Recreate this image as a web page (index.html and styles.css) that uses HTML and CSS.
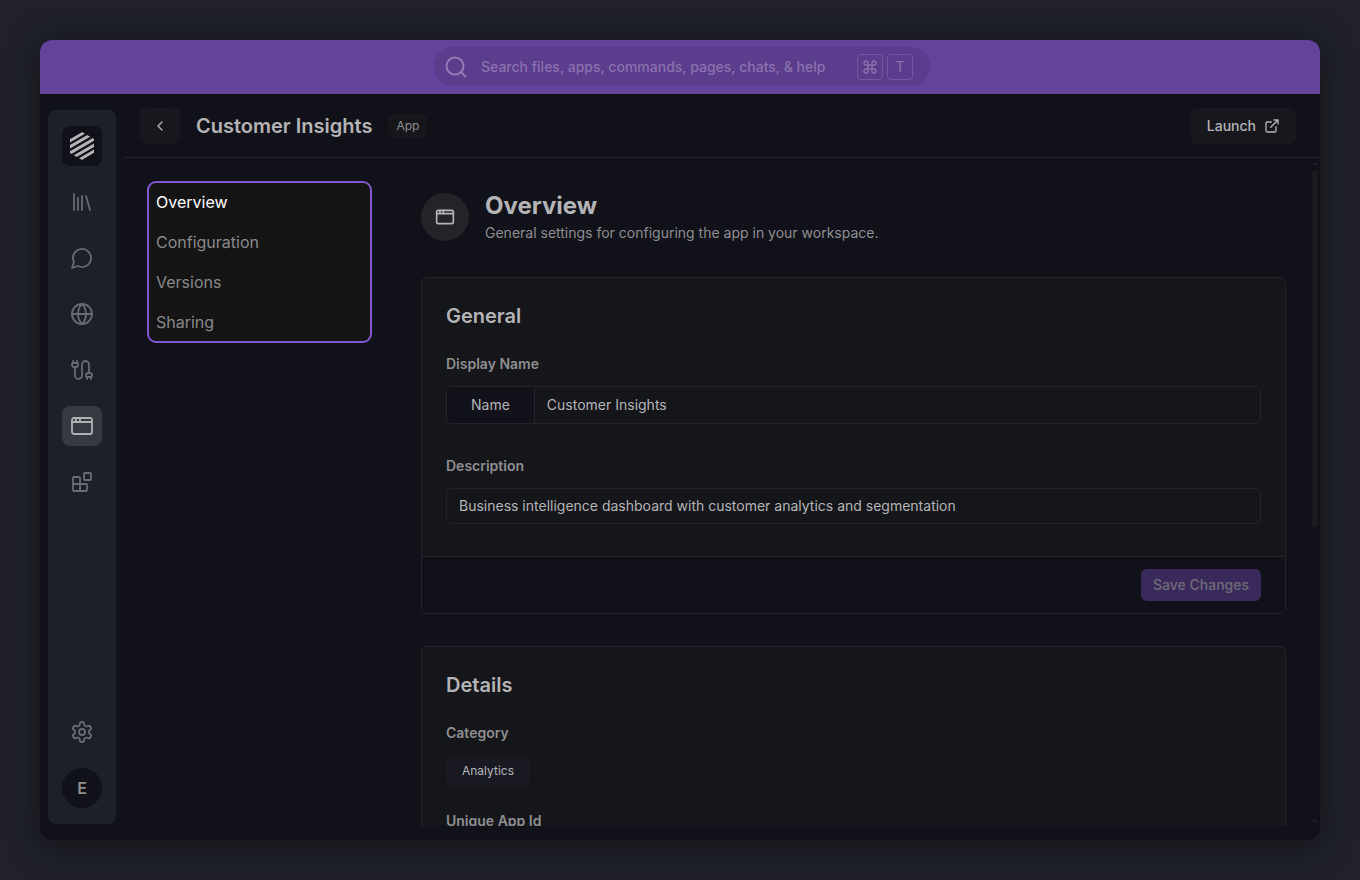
FILE: index.html
```html
<!DOCTYPE html>
<html lang="en">
<head>
<meta charset="utf-8">
<title>Customer Insights</title>
<link rel="stylesheet" href="styles.css">
</head>
<body>
<div class="window">
  <header class="topbar">
    <label class="search">
      <svg class="search-icon" viewBox="0 0 24 24"><circle cx="11" cy="11" r="8.5"/><path d="M17.5 17.5 21.5 21.5"/></svg>
      <input type="text" placeholder="Search files, apps, commands, pages, chats, &amp; help" aria-label="Search">
      <span class="keys">
        <kbd><svg viewBox="0 0 24 24"><path d="M15 6v12a3 3 0 1 0 3-3H6a3 3 0 1 0 3 3V6a3 3 0 1 0-3 3h12a3 3 0 1 0-3-3"/></svg></kbd>
        <kbd>T</kbd>
      </span>
    </label>
  </header>
  <div class="body">
    <nav class="rail" aria-label="Workspace">
      <a class="logo" href="#" aria-label="Home">
        <svg viewBox="0 0 24 28">
          <clipPath id="hex"><path d="M12 0 24 7V21L12 28 0 21V7Z"/></clipPath>
          <g clip-path="url(#hex)"><path d="M-2 9.9 26-6.5M-2 16 26-.3M-2 22.2 26 5.8M-2 28.3 26 12M-2 34.5 26 18.1"/></g>
        </svg>
      </a>
      <a class="rail-item" href="#" aria-label="Library"><svg viewBox="0 0 24 24"><path d="m16 6 4 14M12 6v14M8 8v12M4 4v16"/></svg></a>
      <a class="rail-item" href="#" aria-label="Chats"><svg viewBox="0 0 24 24"><path d="M7.9 20A9 9 0 1 0 4 16.1L2 22Z"/></svg></a>
      <a class="rail-item" href="#" aria-label="Web"><svg viewBox="0 0 24 24"><circle cx="12" cy="12" r="10"/><path d="M12 2a14.5 14.5 0 0 0 0 20 14.5 14.5 0 0 0 0-20M2 12h20"/></svg></a>
      <a class="rail-item" href="#" aria-label="Connections"><svg viewBox="0 0 24 24"><path d="M17 21v-2a1 1 0 0 1-1-1v-1a2 2 0 0 1 2-2h2a2 2 0 0 1 2 2v1a1 1 0 0 1-1 1v2M19 15V6.5a1 1 0 0 0-7 0v11a1 1 0 0 1-7 0V9M21 21v-2h-4M3 5h4V3M7 5a1 1 0 0 1 1 1v1a2 2 0 0 1-2 2H4a2 2 0 0 1-2-2V6a1 1 0 0 1 1-1V3"/></svg></a>
      <a class="rail-item active" href="#" aria-label="Apps"><svg viewBox="0 0 24 24"><rect x="2" y="4" width="20" height="16" rx="2"/><path d="M10 4v4M2 8h20M6 4v4"/></svg></a>
      <a class="rail-item" href="#" aria-label="Blocks"><svg viewBox="0 0 24 24"><rect x="14" y="3" width="7" height="7" rx="1"/><path d="M10 21V8a1 1 0 0 0-1-1H4a1 1 0 0 0-1 1v12a1 1 0 0 0 1 1h12a1 1 0 0 0 1-1v-5a1 1 0 0 0-1-1H3"/></svg></a>
      <a class="rail-item settings" href="#" aria-label="Settings"><svg viewBox="0 0 24 24"><path d="M12.22 2h-.44a2 2 0 0 0-2 2v.18a2 2 0 0 1-1 1.73l-.43.25a2 2 0 0 1-2 0l-.15-.08a2 2 0 0 0-2.73.73l-.22.38a2 2 0 0 0 .73 2.73l.15.1a2 2 0 0 1 1 1.72v.51a2 2 0 0 1-1 1.74l-.15.09a2 2 0 0 0-.73 2.73l.22.38a2 2 0 0 0 2.73.73l.15-.08a2 2 0 0 1 2 0l.43.25a2 2 0 0 1 1 1.73V20a2 2 0 0 0 2 2h.44a2 2 0 0 0 2-2v-.18a2 2 0 0 1 1-1.73l.43-.25a2 2 0 0 1 2 0l.15.08a2 2 0 0 0 2.73-.73l.22-.39a2 2 0 0 0-.73-2.73l-.15-.08a2 2 0 0 1-1-1.74v-.5a2 2 0 0 1 1-1.74l.15-.09a2 2 0 0 0 .73-2.73l-.22-.38a2 2 0 0 0-2.73-.73l-.15.08a2 2 0 0 1-2 0l-.43-.25a2 2 0 0 1-1-1.73V4a2 2 0 0 0-2-2z"/><circle cx="12" cy="12" r="3"/></svg></a>
      <button class="avatar" type="button">E</button>
    </nav>
    <main class="main">
      <header class="page-head">
        <button class="back" type="button" aria-label="Back"><svg viewBox="0 0 24 24"><path d="m15 18-6-6 6-6"/></svg></button>
        <h1>Customer Insights</h1>
        <span class="badge">App</span>
        <button class="launch" type="button">Launch <svg viewBox="0 0 24 24"><path d="M15 3h6v6M10 14 21 3M18 13v6a2 2 0 0 1-2 2H5a2 2 0 0 1-2-2V8a2 2 0 0 1 2-2h6"/></svg></button>
      </header>
      <div class="scroll">
        <div class="content">
          <nav class="subnav" aria-label="App sections">
            <a class="current" href="#">Overview</a>
            <a href="#">Configuration</a>
            <a href="#">Versions</a>
            <a href="#">Sharing</a>
          </nav>
          <div class="sections">
            <div class="intro">
              <span class="intro-icon"><svg viewBox="0 0 24 24"><rect x="2" y="4" width="20" height="16" rx="2"/><path d="M10 4v4M2 8h20M6 4v4"/></svg></span>
              <div class="intro-text">
                <h2>Overview</h2>
                <p>General settings for configuring the app in your workspace.</p>
              </div>
            </div>
            <form class="card">
              <div class="card-body">
                <h3>General</h3>
                <div class="field">
                  <label for="display-name">Display Name</label>
                  <div class="group"><span class="addon">Name</span><input id="display-name" type="text" value="Customer Insights"></div>
                </div>
                <div class="field">
                  <label for="description">Description</label>
                  <input class="boxed" id="description" type="text" value="Business intelligence dashboard with customer analytics and segmentation">
                </div>
              </div>
              <div class="card-foot"><button class="save" type="button" disabled>Save Changes</button></div>
            </form>
            <section class="card">
              <div class="card-body details">
                <h3>Details</h3>
                <div class="field">
                  <h4>Category</h4>
                  <span class="chip">Analytics</span>
                </div>
                <div class="field"><h4>Unique App Id</h4></div>
              </div>
            </section>
          </div>
        </div>
        <div class="scrollbar" aria-hidden="true"><i class="up"></i><i class="thumb"></i><i class="down"></i></div>
      </div>
    </main>
  </div>
</div>
</body>
</html>
```
FILE: styles.css
```css
* { box-sizing: border-box; }
body {
  margin: 0;
  height: 100vh;
  padding: 40px;
  background: #20212a;
  color: #b4b4b6;
  font: 14px/20px Inter, "Liberation Sans", sans-serif;
}
h1, h2, h3, h4, p { margin: 0; }
a { color: inherit; text-decoration: none; }
button, input, kbd { font: inherit; color: inherit; }
button { border: 0; padding: 0; }
input { border: 0; padding: 0; background: none; min-width: 0; outline: 0; }
svg {
  display: block;
  fill: none;
  stroke: currentColor;
  stroke-width: 2;
  stroke-linecap: round;
  stroke-linejoin: round;
}
.window {
  height: 100%;
  display: flex;
  flex-direction: column;
  border-radius: 12px;
  overflow: hidden;
  background: #111219;
  box-shadow: 0 4px 32px rgba(18, 19, 20, .85);
}
.topbar {
  flex: none;
  height: 54px;
  display: flex;
  align-items: center;
  justify-content: center;
  padding: 0 0 1px 4px;
  background: #63439c;
}
.search {
  width: 496px;
  height: 39px;
  display: flex;
  align-items: center;
  padding: 0 17px 0 10px;
  border-radius: 20px;
  background: #5a3d8c;
  color: #957bb5;
}
.search-icon { width: 24px; height: 24px; margin-right: 13px; }
.search input { flex: 1; font-weight: 500; }
.search input::placeholder { color: #8b71ae; opacity: 1; }
.keys { display: flex; gap: 4px; }
.keys kbd {
  width: 26px;
  height: 26px;
  display: grid;
  place-items: center;
  border: 1px solid #7455a3;
  border-radius: 4px;
  color: #8b71ae;
}
.keys svg { width: 16px; height: 16px; }
.body { flex: 1; min-height: 0; display: flex; gap: 8px; padding-left: 8px; }
.rail {
  width: 68px;
  margin: 16px 0;
  padding: 16px 0;
  display: flex;
  flex-direction: column;
  align-items: center;
  gap: 16px;
  border-radius: 8px;
  background: #1c2128;
}
.rail > * { width: 40px; height: 40px; display: grid; place-items: center; border-radius: 8px; }
.logo { background: #111219; color: #b4b4b6; }
.logo svg { width: 24px; height: 28px; stroke-width: 3; stroke-linecap: butt; }
.rail-item { color: #686b70; }
.rail-item svg { width: 24px; height: 24px; stroke-width: 1.8; }
.rail-item.active { background: #353940; color: #b0b1b4; }
.rail .settings { margin-top: auto; }
.rail .avatar { border-radius: 50%; background: #111219; color: #8e8e90; font-size: 16px; font-weight: 600; }
.main { flex: 1; min-width: 0; display: flex; flex-direction: column; padding-bottom: 14px; }
.page-head {
  flex: none;
  height: 64px;
  display: flex;
  align-items: center;
  gap: 16px;
  padding: 0 24px 0 16px;
  border-bottom: 1px solid #242427;
}
.back { width: 40px; height: 36px; display: grid; place-items: center; border-radius: 6px; background: #17181e; }
.back svg { width: 16px; height: 16px; }
h1 { font-size: 20px; line-height: 28px; font-weight: 600; }
.badge { padding: 2px 8px; border-radius: 6px; background: #16171b; color: #8e8e90; font-size: 12px; }
.launch {
  height: 36px;
  margin-left: auto;
  display: flex;
  align-items: center;
  gap: 8px;
  padding: 0 16px;
  border-radius: 6px;
  background: #17181e;
  font-weight: 500;
}
.launch svg { width: 16px; height: 16px; }
.scroll { flex: 1; min-height: 0; display: flex; overflow: hidden; }
.content { flex: 1; min-width: 0; display: flex; align-items: flex-start; gap: 50px; padding: 24px; }
.subnav {
  flex: none;
  width: 223px;
  border-radius: 8px;
  outline: 2px solid #8455d0;
  outline-offset: -1px;
  background: #141415;
  color: #89898a;
  font-size: 16px;
}
.subnav a { display: block; padding: 0 8px; line-height: 40px; }
.subnav .current { color: #fff; }
.sections { flex: 1; min-width: 0; display: flex; flex-direction: column; gap: 32px; padding-top: 8px; }
.intro { display: flex; align-items: center; gap: 16px; margin-bottom: 2px; }
.intro-icon { width: 48px; height: 48px; display: grid; place-items: center; border-radius: 50%; background: #232427; }
.intro-icon svg { width: 20px; height: 20px; }
.intro-text { display: flex; flex-direction: column; gap: 1px; }
h2 { font-size: 24px; line-height: 32px; font-weight: 700; }
.intro p { color: #8e8e90; }
.card { border: 1px solid #242528; border-radius: 6px; background: #15161a; overflow: hidden; }
.card-body { display: flex; flex-direction: column; gap: 32px; padding: 24px 24px 32px; }
h3 { margin-bottom: -8px; font-size: 20px; line-height: 28px; font-weight: 600; }
.details { gap: 24px; }
.details h3 { margin-bottom: 0; }
.field { display: flex; flex-direction: column; align-items: flex-start; gap: 12px; }
.field > label, h4 { font-size: 14px; font-weight: 600; color: #8e8e90; }
.group { width: 100%; height: 38px; display: flex; border: 1px solid #242528; border-radius: 6px; overflow: hidden; }
.addon { padding: 0 24px; line-height: 36px; border-right: 1px solid #242528; background: #111219; }
.group input { flex: 1; padding: 0 12px; }
.boxed { width: 100%; height: 36px; padding: 0 12px 1px; border: 1px solid #242528; border-radius: 6px; }
.card-foot { display: flex; justify-content: flex-end; padding: 12px 24px; border-top: 1px solid #242528; background: #111219; }
.save { height: 32px; padding: 0 12px; border-radius: 6px; background: #3a2a5c; color: #6f6b79; font-weight: 500; }
.chip { padding: 6px 16px; border-radius: 8px; background: #191a21; font-size: 12px; }
.scrollbar { flex: none; width: 10px; display: flex; flex-direction: column; align-items: center; padding: 4px 0 3px; }
.scrollbar i { width: 6px; }
.up { border: 3px solid transparent; border-top: 0; border-bottom-color: #1c1d21; }
.thumb { height: 54%; margin-top: 5px; border-radius: 3px; background: #1a1b1f; }
.down { margin-top: auto; border: 3px solid transparent; border-bottom: 0; border-top-color: #222327; }
```
